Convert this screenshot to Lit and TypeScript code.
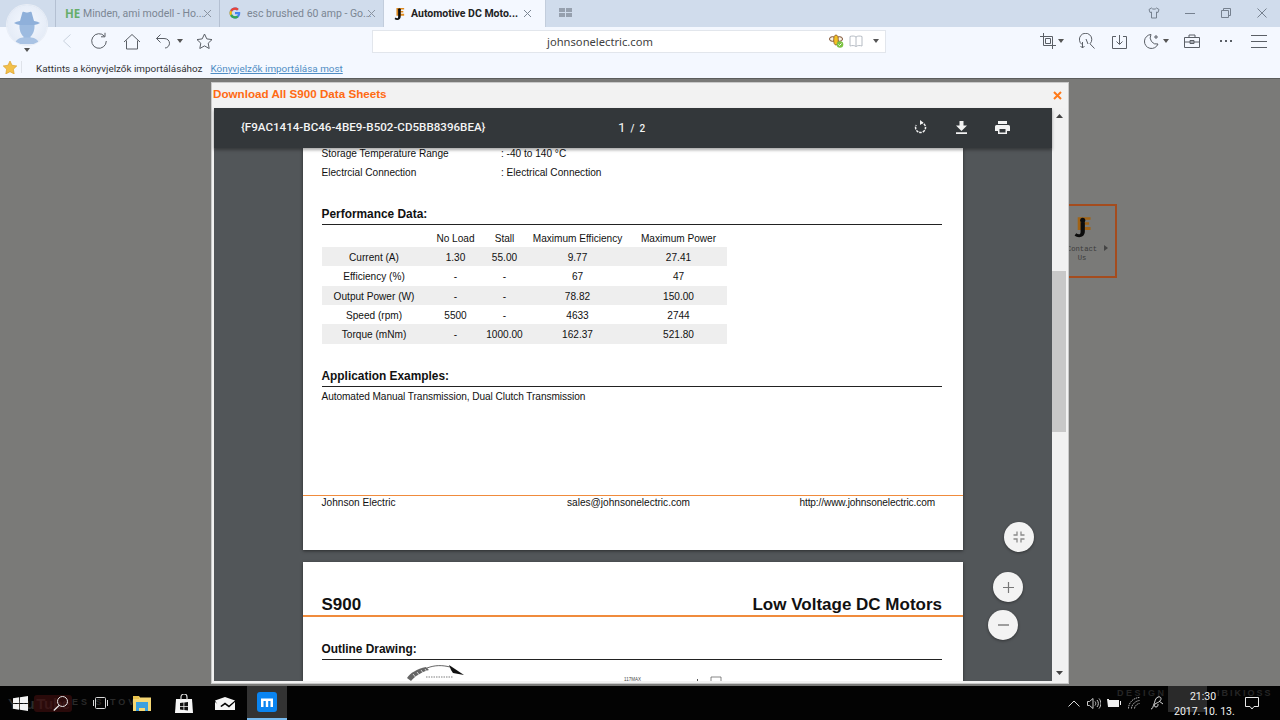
import { LitElement, html, css, svg } from "lit";
import { customElement } from "lit/decorators.js";

const ic = (w: number, h: number, body: unknown, cls = "") =>
  html`<svg class=${cls} width=${w} height=${h} viewBox="0 0 ${w} ${h}" fill="none" stroke="currentColor" stroke-width="1">${body}</svg>`;

const drop = html`<svg width="6" height="4" viewBox="0 0 6 4"><path d="M0 0h6L3 4z" fill="#555"/></svg>`;

const jLogo = (w: number, h: number) => html`<svg width=${w} height=${h} viewBox="0 0 14 15">
  <path d="M4 1h9v1.800H9v1.700h3v1.700H9v1.700h4V10H4z" fill="#e08a1e"/>
  <path d="M6 4.500h3v6.500c0 2.400-1.700 4-4 4-1.200 0-2.300-.4-3.200-1.200l1.200-1.500c.6.500 1.200.7 1.800.7.800 0 1.200-.6 1.200-1.800z" fill="#111"/>
  <circle cx="7.500" cy="3.200" r="1.800" fill="#111"/></svg>`;

const rows = [
  ["Current (A)", "1.30", "55.00", "9.77", "27.41"],
  ["Efficiency (%)", "-", "-", "67", "47"],
  ["Output Power (W)", "-", "-", "78.82", "150.00"],
  ["Speed (rpm)", "5500", "-", "4633", "2744"],
  ["Torque (mNm)", "-", "1000.00", "162.37", "521.80"],
];

@customElement("app-root")
export class AppRoot extends LitElement {
  static styles = css`
    :host { display: flex; flex-direction: column; width: 1280px; height: 720px; overflow: hidden; position: relative; font-family: "Liberation Sans", Arial, sans-serif; background: #7a7a78; }
    svg { display: block; flex: none; }
    .avatar { position: absolute; left: 7px; top: 5px; width: 40px; height: 40px; border-radius: 50%; background: radial-gradient(circle at 50% 45%, #f4f8ff 0%, #e4ebf6 75%, #cfd9e8 100%); box-shadow: 0 0 0 1px #e9eef6; z-index: 3; overflow: hidden; }
    .avatar-drop { position: absolute; left: 24px; top: 48px; z-index: 3; }

    .tabbar { height: 26.500px; background: #d0dcec; display: flex; padding-left: 55px; box-sizing: border-box; flex: none; }
    .tab { width: 164px; display: flex; align-items: center; border-left: 1px solid #b4c0d2; box-sizing: border-box; font: 10.500px Roboto, "Noto Sans", sans-serif; color: #7b8693; padding-left: 9px; white-space: nowrap; }
    .tab.active { background: #f4f8ff; color: #222; font-weight: 700; border-left: 1px solid #c2cddc; border-right: 1px solid #c2cddc; width: 163px; padding-left: 9px; }
    .fav { width: 18px; flex: none; display: flex; align-items: center; }
    .he { font: 700 11.500px "Noto Sans", sans-serif; color: #67ae6a; }
    .tab-text { width: 120px; }
    .tab.active .tab-text { width: 109px; }
    .x { color: #8a94a2; }
    .tab.active .x { color: #7b8693; margin-left: 3px; }
    .grid-ic { margin: 8px 0 0 13px; }
    .win { margin-left: auto; display: flex; align-items: center; color: #76818f; }
    .win span { width: 36px; display: flex; justify-content: center; }

    .toolbar { height: 29.500px; background: #f4f8ff; display: flex; align-items: center; color: #5a5f66; flex: none; position: relative; }
    .slot { display: flex; align-items: center; justify-content: flex-end; }
    .slot.mid { justify-content: center; }
    .back { color: #c9d2de; }
    .addr { width: 512px; height: 21px; background: #fff; border: 1px solid #e2e6ec; display: flex; align-items: center; }
    .addr-text { flex: 1; text-align: center; font: 11.200px "Noto Sans", "Open Sans", sans-serif; color: #3f3f3f; }
    .book { color: #b6bcc4; }
    .bookmarks { height: 22px; background: #f4f8ff; display: flex; align-items: center; font: 9.900px Roboto, "Noto Sans", sans-serif; color: #333; flex: none; padding-left: 3px; }
    .bookmarks span.t { padding-top: 2px; }
    .sep { width: 1px; height: 12px; background: #dfe3ea; margin: 0 14px 0 4px; }
    .link { color: #4f8dc4; text-decoration: underline; margin-left: 8px; }
    .rule { height: 1px; background: #5b5d5c; flex: none; }

    .main { flex: 1; position: relative; background: #7a7a78; }
    .contact { position: absolute; left: 1069px; top: 125px; width: 48px; height: 74px; box-sizing: border-box; border: 2px solid #a44c1e; border-left: none; display: flex; flex-direction: column; align-items: center; font: 7.200px/9px "Liberation Mono", monospace; color: #3c3c3c; padding: 9px 20px 0 0; text-align: center; white-space: nowrap; }
    .contact svg.logo-wrap { filter: brightness(.72); }
    .contact .lbl { margin-top: 7px; }
    .contact .arrow { position: absolute; left: 35px; top: 39px; }

    .modal { position: absolute; left: 211px; top: 3px; width: 858px; height: 602px; box-sizing: border-box; background: #f2f2f2; border: 1px solid #c9c9c9; display: flex; flex-direction: column; }
    .m-head { height: 25px; flex: none; display: flex; align-items: center; justify-content: space-between; padding: 0 6px 0 1px; font: 700 11.650px "Liberation Sans", sans-serif; color: #ff6a13; }
    .m-head span { padding-bottom: 5px; }
    .m-body { flex: 1; display: flex; margin: 0 2px 2px 2px; min-height: 0; }
    .viewer { width: 838px; display: flex; flex-direction: column; position: relative; min-height: 0; }
    .v-bar { height: 40px; box-sizing: border-box; padding-bottom: 2px; flex: none; background: #33373a; color: #f4f4f4; display: flex; align-items: center; padding-left: 27px; box-shadow: 0 2px 3px rgba(0,0,0,.35); position: relative; z-index: 2; font: 500 11.600px Roboto, sans-serif; }
    .v-title { width: 377px; white-space: nowrap; }
    .v-page { display: flex; align-items: baseline; width: 282px; gap: 5px; font-size: 10px; }
    .v-page b { font: 400 13.500px Roboto, sans-serif; }
    .v-ic { width: 41px; display: flex; justify-content: center; color: #f2f2f2; }
    .pages { flex: 1; background: #525659; overflow: hidden; display: flex; flex-direction: column; align-items: center; gap: 12px; min-height: 0; }
    .page { width: 660px; background: #fff; flex: none; color: #111; font-size: 10.100px; box-sizing: border-box; box-shadow: 0 1px 3px rgba(0,0,0,.5); }
    .p1 { height: 402px; display: flex; flex-direction: column; }
    .inner { padding: 0 21px 0 18.500px; display: flex; flex-direction: column; }
    .spec { display: grid; grid-template-columns: 179.500px 1fr; grid-auto-rows: 10px; row-gap: 9px; line-height: 12px; }
    .sec { font-weight: 700; font-size: 11.900px; line-height: 14px; padding-bottom: 3px; border-bottom: 1px solid #222; }
    .sec.perf { margin-top: 30px; }
    .sec.app { margin-top: 25px; }
    .table { width: 405px; margin-top: 4px; display: grid; grid-template-columns: 105px 58px 40px 106px 96px; text-align: center; }
    .th { height: 18px; line-height: 20px; }
    .td { height: 19.333px; line-height: 21.333px; white-space: nowrap; }
    .band { background: #eeeeee; }
    .para { margin-top: 2px; height: 14px; line-height: 16px; letter-spacing: -.06px; }
    .foot { margin-top: auto; height: 55px; border-top: 1px solid #f08b3c; box-sizing: border-box; padding: 0 28px 0 18.500px; display: flex; line-height: 14px; }
    .foot .a { flex: 0 0 245.500px; }
    .foot .c { margin-left: auto; letter-spacing: -.1px; }
    .p2 { flex: 1; min-height: 0; overflow: hidden; padding-top: 32px; }
    .p2-title { display: flex; justify-content: space-between; padding: 0 21px 0 18.500px; font-weight: 700; font-size: 17px; height: 20px; line-height: 22px; }
    .orange { height: 1.500px; background: #f08b3c; margin-top: 1px; }
    .sec.outline { margin-top: 25px; }

    .fab { position: absolute; width: 30px; height: 30px; border-radius: 50%; background: #f3f3f3; color: #777; box-shadow: 0 1px 3px rgba(0,0,0,.4); display: flex; align-items: center; justify-content: center; z-index: 3; }
    .f1 { left: 790px; top: 414px; }
    .f2 { left: 779px; top: 464px; }
    .f3 { left: 774px; top: 502px; }

    .sb { width: 14px; background: #f1f1f1; position: relative; display: flex; flex-direction: column; align-items: center; }
    .sb-up { margin-top: 6px; }
    .thumb { width: 14px; height: 161px; background: #c8c8c8; margin-top: 153px; }
    .sb-down { margin-top: auto; margin-bottom: 6px; }

    .taskbar { height: 34px; background: #030303; flex: none; display: flex; align-items: center; position: relative; color: #e8e8e8; overflow: hidden; }
    .ghost { position: absolute; color: #262626; white-space: nowrap; font: 700 10px "Liberation Sans", sans-serif; letter-spacing: 2px; }
    .g1 { left: 8px; top: 9px; font-size: 15px; letter-spacing: -.3px; color: #2b2b2b; }
    .g1 b { background: #2a0a0a; color: #3a1818; border-radius: 3px; padding: 0 2px; font-weight: 700; }
    .g2 { left: 72px; top: 11px; font-size: 9px; letter-spacing: 3px; color: #2a2a2a; }
    .g3 { left: 1117px; top: 2px; font-size: 9px; letter-spacing: 2.500px; }
    .g4 { left: 1217px; top: 2px; font-size: 9px; letter-spacing: 2px; }
    .qr { position: absolute; left: 1168px; top: 0; width: 39px; height: 26px; background: #2a2a2a; }
    .tb { width: 40px; height: 34px; display: flex; align-items: center; justify-content: center; position: relative; box-sizing: border-box; flex: none; }
    .tb-apps { display: flex; gap: 1.500px; margin-left: 2px; }
    .tb.on { background: #333; border-bottom: 2px solid #76b9ed; }
    .tray { margin-left: auto; display: flex; align-items: center; height: 34px; padding-right: 8px; position: relative; }
    .tr { width: 20px; display: flex; justify-content: center; }
    .tr.pen { margin-left: 3px; }
    .clock { width: 58px; margin-left: 7px; text-align: center; font: 10.500px/15px Roboto, "Noto Sans", sans-serif; color: #f2f2f2; white-space: nowrap; padding-top: 1px; }
    .note { width: 40px; display: flex; justify-content: center; }
  `;

  render() {
    const x = ic(9, 9, svg`<path d="M1 1l7 7M8 1L1 8"/>`);
    const w = (n: number) => `width:${n}px`;
    return html`
      <div class="avatar">
        <svg width="40" height="40" viewBox="0 0 40 40">
          <path d="M13 16l2.500-9c1.500-1 3 .5 4.500.5s3-1.500 4.500-.5l2.500 9z" fill="#8fb0da"/>
          <path d="M7 18c3-2 8-2.500 13-2.500s10 .5 13 2.500c-3 2-8 2.500-13 2.500S10 20 7 18z" fill="#8fb0da"/>
          <path d="M12.500 20h15c.3 5-1.500 9.500-4 11.500v2h-7v-2c-2.500-2-4.300-6.500-4-11.500z" fill="#9dbbe0"/>
          <path d="M8 39c0-3.500 4-6.500 8-6.500h8c4 0 8 3 8 6.500z" fill="#a9c3e4"/>
        </svg>
      </div>
      <div class="avatar-drop">${drop}</div>

      <div class="tabbar">
        <div class="tab">
          <span class="fav he">HE</span><span class="tab-text">Minden, ami modell - Ho...</span><span class="x">${x}</span>
        </div>
        <div class="tab">
          <span class="fav"><svg width="12" height="12" viewBox="0 0 48 48">
            <path d="M44 20H24v8.500h11.500C34 34 29.600 37 24 37c-7.200 0-13-5.800-13-13s5.800-13 13-13c3.100 0 6 1.100 8.200 3l6.400-6.400C34.600 4 29.600 2 24 2 11.800 2 2 11.800 2 24s9.800 22 22 22c11 0 21-8 21-22 0-1.300-.200-2.700-.500-4z" fill="#4285f4"/>
            <path d="M5 13.500l7 5.100C13.900 14 18.600 11 24 11c3.100 0 6 1.100 8.200 3l6.400-6.400C34.600 4 29.600 2 24 2 15.800 2 8.700 6.500 5 13.500z" fill="#ea4335"/>
            <path d="M5 13.500l7 5.100c-.6 1.700-1 3.500-1 5.400s.4 3.700 1 5.400l-7 5.300C3.100 31 2 27.700 2 24s1.100-7 3-10.500z" fill="#fbbc05"/>
            <path d="M24 46c5.500 0 10.500-1.800 14.300-5.100l-6.800-5.500C29.600 36.600 27 37 24 37c-5.500 0-10.200-3-12-7.600l-7 5.400C8.700 41.500 15.800 46 24 46z" fill="#34a853"/></svg></span>
          <span class="tab-text">esc brushed 60 amp - Go...</span><span class="x">${x}</span>
        </div>
        <div class="tab active">
          <span class="fav">${jLogo(12, 13)}</span><span class="tab-text">Automotive DC Moto...</span><span class="x">${x}</span>
        </div>
        <svg class="grid-ic" width="13" height="9" viewBox="0 0 13 9"><path d="M0 0h6v4H0zM7 0h6v4H7zM0 5h6v4H0zM7 5h6v4H7z" fill="#96a0ae"/></svg>
        <div class="win">
          <span>${ic(12, 12, svg`<path d="M3.500 1L1 2.500l1 3 1.500-.5V11h5V5l1.500.5 1-3L8.500 1C8 2.500 4 2.500 3.500 1z"/>`)}</span>
          <span>${ic(10, 10, svg`<path d="M0 5.500h10"/>`)}</span>
          <span>${ic(10, 10, svg`<path d="M.5 2.500h7v7h-7zM2.500 2.500v-2h7v7h-2"/>`)}</span>
          <span>${ic(10, 10, svg`<path d="M.5.500l9 9M9.500.500l-9 9"/>`)}</span>
        </div>
      </div>

      <div class="toolbar">
        <span class="slot back" style=${w(72)}>${ic(10, 16, svg`<path d="M8.500 1.500L1.500 8l7 6.500"/>`)}</span>
        <span class="slot" style=${w(36)}>${ic(18, 18, svg`<path d="M14.500 4.200A7.300 7.300 0 1 0 16.300 9"/><path d="M15 .8v4h-4"/>`)}</span>
        <span class="slot" style=${w(33)}>${ic(18, 17, svg`<path d="M1 9l8-7.500L17 9M3.500 7.500v8.500h11V7.500"/>`)}</span>
        <span class="slot" style=${w(30)}>${ic(16, 16, svg`<path d="M5.500 1.500L1.500 5.500l4 4M1.500 5.500h7.500c3.500 0 5.500 2.200 5.500 4.700S12.500 15 10 15"/>`)}</span>
        <span class="slot" style=${w(12)}>${drop}</span>
        <span class="slot" style=${w(30)}>${ic(17, 16, svg`<path d="M8.500 1l2.300 4.900 5.200.7-3.800 3.600 1 5.300-4.700-2.600-4.700 2.600 1-5.300L1 6.600l5.200-.7z"/>`)}</span>
        <span style=${w(159)}></span>
        <div class="addr">
          <span class="addr-text">johnsonelectric.com</span>
          <span class="slot mid" style=${w(18)}>
            <svg width="15" height="14" viewBox="0 0 15 14"><ellipse cx="3.500" cy="5" rx="3" ry="2.300" fill="#f7f3e6" stroke="#7a4a2a"/><ellipse cx="10.500" cy="5" rx="3" ry="2.300" fill="#f7f3e6" stroke="#7a4a2a"/><ellipse cx="7" cy="6" rx="2.300" ry="5" fill="#f2c022" stroke="#7a4a2a" stroke-width=".7"/><circle cx="11" cy="10.500" r="3.300" fill="#7cc243"/><path d="M9.500 10.500l1 1 2-2" stroke="#fff" fill="none"/></svg>
          </span>
          <span class="slot mid book" style=${w(22)}>${ic(14, 12, svg`<path d="M7 2C5.500.8 3 .8 1 1.500V11c2-.7 4.500-.7 6 .5 1.500-1.200 4-1.200 6-.5V1.500C11 .8 8.500.8 7 2zM7 2v9.500"/>`)}</span>
          <span class="slot mid" style=${w(18)}>${drop}</span>
        </div>
        <span class="slot" style=${w(170)}>${ic(16, 16, svg`<path d="M3.500 0v12.500H16M0 3.500h12.500V16"/><path d="M5.500 5.500h5v5h-5z"/>`)}</span>
        <span class="slot" style=${w(8)}>${drop}</span>
        <span class="slot" style=${w(31)}>${ic(16, 16, svg`<path d="M3 11.500A6.200 6.200 0 1 1 11 10.800L15.500 15.500"/><path d="M7 6l2 5M3.500 9v6M1.500 13l2 2 2-2"/>`)}</span>
        <span class="slot" style=${w(31.5)}>${ic(15, 15, svg`<path d="M4 2.500H.5v12h14v-12H11M7.500 1v9M4.500 7.500l3 3 3-3"/>`)}</span>
        <span class="slot" style=${w(33.5)}>${ic(16, 16, svg`<path d="M7 1.500A7 7 0 1 0 14 11 6.500 6.500 0 0 1 7 1.500z"/><path d="M12 2v4M10 4h4"/>`)}</span>
        <span class="slot" style=${w(9)}>${drop}</span>
        <span class="slot" style=${w(30.7)}>${ic(16, 14, svg`<path d="M.5 3.500h15v10H.5zM5 3.500V1h6v2.500M.5 8h15M6 6.500h4v3H6z"/>`)}</span>
        <span class="slot" style=${w(32.3)}>
          <svg width="12" height="2" viewBox="0 0 12 2"><path d="M0 0h2v2H0zM5 0h2v2H5zM10 0h2v2h-2z" fill="#5a5f66"/></svg>
        </span>
        <span class="slot" style=${w(35)}>${ic(16, 13, svg`<path d="M0 .5h16M0 6.500h16M0 12.500h16"/>`)}</span>
      </div>

      <div class="bookmarks">
        <svg width="14" height="13" viewBox="0 0 14 13"><path d="M7 0l2.100 4.300 4.700.6-3.400 3.300.8 4.800L7 10.700 2.800 13l.8-4.800L.2 4.900l4.700-.6z" fill="#f2c04a" stroke="#d99a22" stroke-width=".6"/></svg>
        <span class="sep"></span>
        <span class="t">Kattints a könyvjelzők importálásához</span>
        <span class="t link">Könyvjelzők importálása most</span>
      </div>
      <div class="rule"></div>

      <div class="main">
        <div class="contact">
          <svg class="logo-wrap" width="20" height="23" viewBox="0 0 14 15">
            <path d="M4 1h9v1.800H9v1.700h3v1.700H9v1.700h4V10H4z" fill="#e08a1e"/>
            <path d="M6 4.500h3v6.500c0 2.400-1.700 4-4 4-1.200 0-2.300-.4-3.200-1.200l1.200-1.500c.6.500 1.200.7 1.800.7.800 0 1.200-.6 1.200-1.800z" fill="#111"/>
            <circle cx="7.500" cy="3.200" r="1.800" fill="#111"/>
          </svg>
          <span class="lbl">Contact<br />Us</span>
          <svg class="arrow" width="4" height="6" viewBox="0 0 4 6"><path d="M0 0l4 3-4 3z" fill="#444"/></svg>
        </div>

        <div class="modal">
          <div class="m-head">
            <span>Download All S900 Data Sheets</span>
            <svg width="9" height="9" viewBox="0 0 9 9"><path d="M1 1l7 7M8 1L1 8" stroke="#ff7a1a" stroke-width="2"/></svg>
          </div>
          <div class="m-body">
            <div class="viewer">
              <div class="v-bar">
                <span class="v-title">{F9AC1414-BC46-4BE9-B502-CD5BB8396BEA}</span>
                <span class="v-page"><b>1</b><span>/</span><span>2</span></span>
                <span class="v-ic">
                  <svg width="13" height="14" viewBox="0 0 13 14"><path d="M6.500 2.500a5 5 0 1 1-4.300 2.500" fill="none" stroke="#f2f2f2" stroke-width="1.500" stroke-dasharray="2.500 1"/><path d="M6 0l3.500 2.700L6 5z" fill="#f2f2f2"/></svg>
                </span>
                <span class="v-ic">
                  <svg width="11" height="13" viewBox="0 0 11 13"><path d="M3.500 0h4v4.500H11L5.500 10 0 4.500h3.500zM0 11.300h11V13H0z" fill="#f2f2f2"/></svg>
                </span>
                <span class="v-ic">
                  <svg width="15" height="13" viewBox="0 0 15 13"><path d="M3 0h9v3H3zM1.500 4h12A1.500 1.500 0 0 1 15 5.500V10h-3v3H3v-3H0V5.500A1.500 1.500 0 0 1 1.500 4zM4.500 8v3.500h6V8z" fill="#f2f2f2" fill-rule="evenodd"/></svg>
                </span>
              </div>
              <div class="pages">
                <div class="page p1">
                  <div class="inner">
                    <div class="spec">
                      <span>Storage Temperature Range</span><span>: -40 to 140 °C</span>
                      <span>Electrcial Connection</span><span>: Electrical Connection</span>
                    </div>
                    <div class="sec perf">Performance Data:</div>
                    <div class="table">
                      <span class="th"></span><span class="th">No Load</span><span class="th">Stall</span><span class="th">Maximum Efficiency</span><span class="th">Maximum Power</span>
                      ${rows.map((r, i) => r.map((c) => html`<span class="td ${i % 2 === 0 ? "band" : ""}">${c}</span>`))}
                    </div>
                    <div class="sec app">Application Examples:</div>
                    <div class="para">Automated Manual Transmission, Dual Clutch Transmission</div>
                  </div>
                  <div class="foot">
                    <span class="a">Johnson Electric</span>
                    <span>sales@johnsonelectric.com</span>
                    <span class="c">http://www.johnsonelectric.com</span>
                  </div>
                </div>
                <div class="page p2">
                  <div class="p2-title"><span>S900</span><span>Low Voltage DC Motors</span></div>
                  <div class="orange"></div>
                  <div class="inner">
                    <div class="sec outline">Outline Drawing:</div>
                  </div>
                  <svg width="660" height="24" viewBox="0 0 660 24">
                    <path d="M104 18c3-5 10-9 19-11l3 3c-7 2-14 6-18 11z" fill="#666"/>
                    <path d="M110 14l4 5M114 12l4 5M118 10l3 4M122 9l2 3" stroke="#fff" stroke-width=".7"/>
                    <path d="M124 8c8-3 15-3 23-1" fill="none" stroke="#222" stroke-width=".7"/>
                    <path d="M146 5l15 10-11-2-2-3z" fill="#111"/>
                    <path d="M123 17h27" stroke="#aaa" stroke-width="1.500" stroke-dasharray="1.500 1"/>
                    <text x="321" y="20.500" font-size="4.500" font-family="Liberation Sans" fill="#444">117MAX</text>
                    <path d="M408 17h10v7h-10z" fill="none" stroke="#555" stroke-width=".7"/>
                    <path d="M394 19h1v3h-1z" fill="#555"/>
                  </svg>
                </div>
              </div>
              <div class="fab f1"><svg width="12" height="12" viewBox="0 0 12 12"><path d="M4 .5v3.500H.5M8 .5v3.500h3.500M4 11.500V8H.5M8 11.500V8h3.500" fill="none" stroke="#8a8a8a" stroke-width="1.300"/></svg></div>
              <div class="fab f2"><svg width="11" height="11" viewBox="0 0 11 11"><path d="M5.500 0v11M0 5.500h11" stroke="#777" stroke-width="1.200"/></svg></div>
              <div class="fab f3"><svg width="11" height="2" viewBox="0 0 11 2"><path d="M0 1h11" stroke="#777" stroke-width="1.400"/></svg></div>
            </div>
            <div class="sb">
              <svg class="sb-up" width="7" height="4" viewBox="0 0 7 4"><path d="M3.500 0L7 4H0z" fill="#444"/></svg>
              <div class="thumb"></div>
              <svg class="sb-down" width="7" height="4" viewBox="0 0 7 4"><path d="M0 0h7L3.500 4z" fill="#444"/></svg>
            </div>
          </div>
        </div>
      </div>

      <div class="taskbar">
        <span class="ghost g1">You<b>Tube</b></span>
        <span class="ghost g2">ES S TOVV</span>
        <span class="qr"></span>
        <span class="ghost g3">DESIGN</span>
        <span class="ghost g4">IBIKIOSS</span>
        <span class="tb"><svg width="15" height="15" viewBox="0 0 15 15"><path d="M0 2.200L6.200 1.300V7H0zM7 1.200L15 0v7H7zM0 8h6.200v5.700L0 12.800zM7 8h8v7L7 13.800z" fill="#f4f4f4"/></svg></span>
        <span class="tb"><svg width="15" height="15" viewBox="0 0 15 15" fill="none" stroke="#e8e8e8"><circle cx="9.500" cy="5.500" r="5"/><path d="M6 9.500L.8 14.500" stroke-width="1.200"/></svg></span>
        <span class="tb"><svg width="15" height="14" viewBox="0 0 15 14" fill="none" stroke="#d8d8d8"><rect x="2.500" y="1.500" width="10" height="11" rx="1"/><path d="M.5 4v6M14.500 4v6"/></svg></span>
        <div class="tb-apps">
          <span class="tb"><svg width="18" height="15" viewBox="0 0 18 15"><path d="M0 0h6l1 1.500h11V15H0z" fill="#f5d774"/><path d="M0 0h6v3H0z" fill="#e8c34e"/><path d="M3 6h12v9H12v-3H6v3H3z" fill="#3aa0e0"/><path d="M6 12h6v3H6z" fill="#f5d774"/></svg></span>
          <span class="tb"><svg width="18" height="19" viewBox="0 0 18 19"><path d="M1 5h16l1 14H0z" fill="#f6f6f6"/><path d="M6 6V3a3 3 0 0 1 6 0v3" fill="none" stroke="#ddd" stroke-width="1.200"/><path d="M5 9l3.500-.5V12H5zM9.300 8.400l3.700-.5V12H9.300zM5 12.700h3.500v3.300L5 15.600zM9.300 12.700H13V16.500l-3.700-.5z" fill="#111"/></svg></span>
          <span class="tb"><svg width="20" height="13" viewBox="0 0 20 13"><path d="M0 3.500L10 0l10 3.500-6 5-4-3-6 4.500z" fill="#f6f6f6"/><path d="M0 5v8h20V5l-6 5.500-4-3-3.500 2.500z" fill="#f6f6f6"/></svg></span>
          <span class="tb on"><svg width="20" height="20" viewBox="0 0 20 20"><rect width="20" height="20" rx="3" fill="#0a84f0"/><path d="M4 15V6.500h12V15h-2.500V9H11.200v6H8.800V9H6.500v6z" fill="#fff"/></svg></span>
        </div>
        <div class="tray">
          <span class="tr"><svg width="12" height="7" viewBox="0 0 12 7" fill="none" stroke="#d8d8d8"><path d="M.5 6.500L6 1l5.500 5.500"/></svg></span>
          <span class="tr"><svg width="14" height="11" viewBox="0 0 14 11" fill="none" stroke="#c8c8c8"><path d="M.5 3.500h2L6 .5v10L2.500 7.500h-2zM8 3.500c1 1.200 1 2.800 0 4M10 2c1.800 2 1.800 5 0 7M12 .5c2.500 3 2.500 7 0 10"/></svg></span>
          <span class="tr"><svg width="14" height="8" viewBox="0 0 14 8"><path d="M0 0h2v1h10v7H1z" fill="#f0f0f0"/><path d="M13 2h1v4h-1z" fill="#f0f0f0"/></svg></span>
          <span class="tr"><svg width="12" height="12" viewBox="0 0 12 12" fill="none" stroke="#aaa" stroke-dasharray="1.500 .7"><path d="M.5 11.500C.5 6 5 .8 11.500.5M3.500 11.500C3.500 8 7 4 11.500 3.500M6.500 11.500c0-2 2.500-5 5-5"/></svg></span>
          <span class="tr pen"><svg width="14" height="14" viewBox="0 0 14 14" fill="none" stroke="#d8d8d8"><path d="M1 13c2 0 2-3 3-5s1-6 4-7 4 2 2 4-4 2-5 3-1 3 1 3 2-2 2-3M9 5l4 3"/></svg></span>
          <div class="clock">21:30<br />2017. 10. 13.</div>
          <span class="note"><svg width="14" height="13" viewBox="0 0 14 13" fill="none" stroke="#e8e8e8"><path d="M.5.500h13v9H9L7 12 5 9.500H.5z"/></svg></span>
        </div>
      </div>
    `;
  }
}
